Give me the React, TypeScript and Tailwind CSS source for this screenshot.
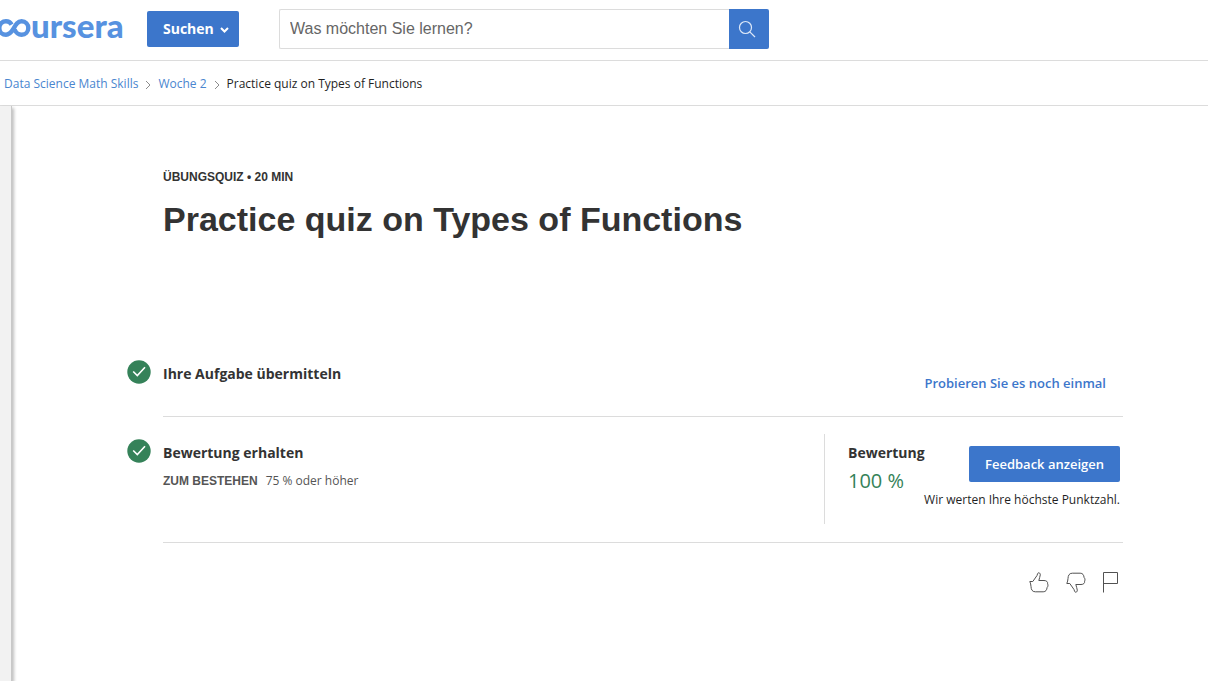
import React from "react";

const OPEN = "font-['Open_Sans',sans-serif]";

function Logo() {
  return (
    <a href="#home" aria-label="coursera" className="-ml-1 flex h-8 items-center text-[#5792e0]">
      <svg width="35" height="18" viewBox="0 0 35 18" fill="none" stroke="currentColor" strokeWidth="4.4" aria-hidden="true">
        <path d="M15.600 5.600C14.400 3.500 12.500 2.300 10 2.300C6 2.300 3.300 5.200 3.300 9S6 15.700 10 15.700C13.400 15.700 15.200 13.400 17.300 10C19.600 6 21.200 2.300 25.600 2.300C29.600 2.300 32.300 5.200 32.300 9S29.600 15.700 25.600 15.700C22 15.700 19.900 13.600 18.600 10.500" />
      </svg>
      <span className="pb-1.5 font-[Lato,sans-serif] text-[33px] font-black leading-[26px]">ursera</span>
    </a>
  );
}

function Crumb() {
  return (
    <svg width="6" height="10" viewBox="0 0 6 10" fill="none" stroke="#8c8c8c" className="mt-0.5" aria-hidden="true">
      <path d="M1 1L5 5L1 9" />
    </svg>
  );
}

function Check() {
  return (
    <svg width="24" height="24" viewBox="0 0 24 24" className="shrink-0" aria-hidden="true">
      <circle cx="12" cy="12" r="11.700" fill="#358259" />
      <path d="M6.200 11.500L10.300 15.500L18 7.200" fill="none" stroke="#fff" strokeWidth="1.600" />
    </svg>
  );
}

const THUMB =
  "M.8 9.500H3.800L8 3.500L8.600 1.700C9 .2 11.300 .5 11.300 2.800C11.300 5 10 6.300 9.800 8.500H15C17.600 8.500 19 10 18.600 11.800C19.300 13.200 19 14.600 18.100 15.500C17.800 18 16.800 19.800 14.200 19.800H6.300C2.900 19.800 2.200 17.300 2 14.500C1.900 12.800 1.500 11 .8 9.500Z";

export default function App() {
  return (
    <div className={`flex min-h-screen flex-col bg-white text-[#333] ${OPEN}`}>
      <header className="flex h-[61px] items-start border-b border-[#dcdcdc]">
        <div className="flex w-[147px] pt-3">
          <Logo />
        </div>
        <button type="button" className="mt-[11px] flex h-9 w-[92px] items-center gap-1.5 rounded-[2px] bg-[#3c76cb] pl-4 text-sm font-bold text-white">
          Suchen
          <svg width="9" height="8" viewBox="0 0 9 8" fill="none" stroke="currentColor" strokeWidth="2" className="mt-0.5" aria-hidden="true">
            <path d="M1 2L4.500 5.500L8 2" />
          </svg>
        </button>
        <form className="ml-10 mt-[9px] flex h-10 w-[490px]" onSubmit={(e) => e.preventDefault()}>
          <input
            type="text"
            aria-label="Was möchten Sie lernen?"
            placeholder="Was möchten Sie lernen?"
            className="min-w-0 flex-1 rounded-l-[2px] border border-r-0 border-[#dcdcdc] px-[10px] font-['Liberation_Sans',sans-serif] text-base outline-none placeholder:text-[#666]"
          />
          <button type="submit" aria-label="Suchen" className="flex w-10 items-center justify-center rounded-r-[2px] bg-[#3c76cb] text-white">
            <svg width="18" height="18" viewBox="0 0 18 18" fill="none" stroke="#dde8f8" strokeWidth="1.200" className="mr-1" aria-hidden="true">
              <circle cx="7.500" cy="7.500" r="6" />
              <path d="M11.800 11.800L17 17" />
            </svg>
          </button>
        </form>
      </header>

      <nav aria-label="Breadcrumb" className="flex h-[45px] items-center gap-[7px] border-b border-[#dcdcdc] pl-1 pt-0.5 text-xs">
        <a href="#course" className="text-[#4a86cf]">Data Science Math Skills</a>
        <Crumb />
        <a href="#week" className="text-[#4a86cf]">Woche 2</a>
        <Crumb />
        <span className="text-[#1f1f1f]">Practice quiz on Types of Functions</span>
      </nav>

      <div className="flex flex-1">
        <aside className="w-3 shrink-0 border-r border-[#c8c8c8] bg-[#f2f2f2] shadow-[2px_2px_3px_rgba(0,0,0,0.25)]" />
        <main className="min-w-0 flex-1 pl-[115px] pr-[85px] pt-[62px]">
          <div className="pl-9 font-['Liberation_Sans',sans-serif] font-bold">
            <p className="text-xs leading-[18px]">ÜBUNGSQUIZ • 20 MIN</p>
            <h1 className="mt-3 text-[34px] leading-[42px]">Practice quiz on Types of Functions</h1>
          </div>

          <section className="mt-[120px] flex gap-3">
            <Check />
            <div className="flex h-[57px] flex-1 justify-between border-b border-[#dcdcdc]">
              <h2 className="mt-1 text-sm font-bold leading-5">Ihre Aufgabe übermitteln</h2>
              <a href="#retry" className="mr-[17px] mt-[13px] text-[13px] font-semibold leading-5 text-[#3c76cb]">
                Probieren Sie es noch einmal
              </a>
            </div>
          </section>

          <section className="flex gap-3">
            <div className="pt-[22px]">
              <Check />
            </div>
            <div className="flex h-[126px] flex-1 justify-between border-b border-[#dcdcdc]">
              <div className="pt-[26px]">
                <h2 className="text-sm font-bold leading-5">Bewertung erhalten</h2>
                <p className="mt-2 flex gap-2 text-xs leading-5 text-[#555]">
                  <span className="font-['Liberation_Sans',sans-serif] font-bold">ZUM BESTEHEN</span>
                  <span>75 % oder höher</span>
                </p>
              </div>
              <div className="mt-[17px] flex h-[90px] w-[299px] justify-between border-l border-[#dcdcdc] pl-[23px] pr-[3px]">
                <div className="w-0 whitespace-nowrap pt-[9px]">
                  <h3 className="text-sm font-bold leading-5">Bewertung</h3>
                  <p className="mt-1 text-xl leading-7 text-[#358259]">100 %</p>
                </div>
                <div className="flex flex-col items-end pt-3">
                  <button type="button" className="h-9 w-[151px] rounded-[2px] bg-[#3c76cb] pt-0.5 text-[13px] font-semibold text-white">
                    Feedback anzeigen
                  </button>
                  <p className="mt-2 whitespace-nowrap text-xs leading-5 text-[#1f1f1f]">Wir werten Ihre höchste Punktzahl.</p>
                </div>
              </div>
            </div>
          </section>

          <div className="mt-[29px] flex justify-end gap-[17px] pr-1 text-[#525252]">
            <button type="button" aria-label="Gefällt mir">
              <svg width="20" height="21" viewBox="0 0 20 21" fill="none" stroke="currentColor">
                <path d={THUMB} />
              </svg>
            </button>
            <button type="button" aria-label="Gefällt mir nicht">
              <svg width="20" height="21" viewBox="0 0 20 21" fill="none" stroke="currentColor">
                <path d={THUMB} transform="matrix(1 0 0 -1 0 21)" />
              </svg>
            </button>
            <button type="button" aria-label="Problem melden">
              <svg width="16" height="21" viewBox="0 0 16 21" fill="none" stroke="currentColor">
                <path d="M.5 20.500V.5H14.500V11.500H.5" />
              </svg>
            </button>
          </div>
        </main>
      </div>
    </div>
  );
}
